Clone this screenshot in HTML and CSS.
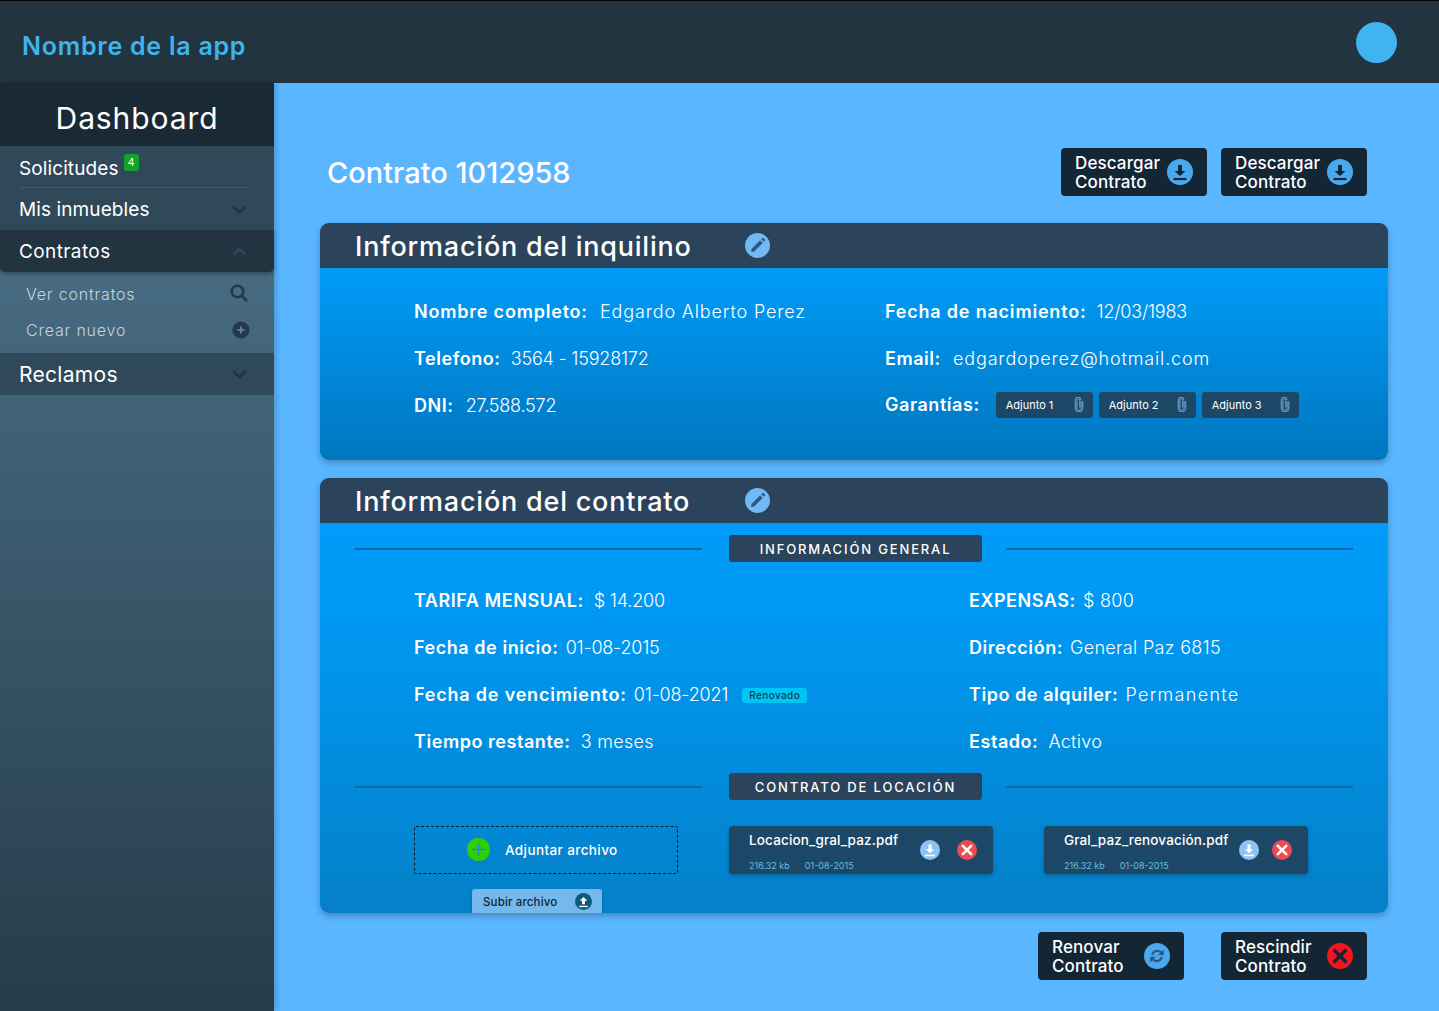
FILE: index.html
```html
<!DOCTYPE html>
<html lang="es">
<head>
<meta charset="utf-8">
<title>Nombre de la app</title>
<link rel="stylesheet" href="styles.css">
</head>
<body>
<svg class="sprite" width="0" height="0">
  <symbol id="i-down" viewBox="0 0 24 24"><path d="M10.200 5.500h3.600V11h3.200L12 15.800 7 11h3.200z"/><rect x="6" y="17.500" width="12" height="2"/></symbol>
  <symbol id="i-up" viewBox="0 0 24 24"><path d="M10 16h4v-5h3.400L12 5.600 6.600 11H10z"/><rect x="6" y="18" width="12" height="2"/></symbol>
  <symbol id="i-x" viewBox="0 0 24 24"><path d="M7 7l10 10M17 7L7 17" fill="none" stroke="currentColor" stroke-width="3.200" stroke-linecap="round"/></symbol>
  <symbol id="i-pen" viewBox="0 0 24 24"><path d="M6 15.500L14.500 7l2.500 2.500L8.500 18H6zM15.500 6l1-1a1 1 0 0 1 1.400 0l1.100 1.100a1 1 0 0 1 0 1.400l-1 1z"/></symbol>
  <symbol id="i-clip" viewBox="0 0 12 18"><path d="M8.500 5v8.500a2.500 2.500 0 0 1-5 0V4a1.700 1.700 0 0 1 3.400 0v8.500" fill="none" stroke="currentColor" stroke-width="1.100"/><path d="M10.500 5v8.500a4.500 4.500 0 0 1-9 0V4a3.500 3.500 0 0 1 7-.5" fill="none" stroke="currentColor" stroke-width="1.100"/></symbol>
  <symbol id="i-chev" viewBox="0 0 14 8"><path d="M1.200 1L7 6.600 12.800 1" fill="none" stroke="currentColor" stroke-width="2.400"/></symbol>
  <symbol id="i-sync" viewBox="0 0 24 24"><path d="M6.500 11a6 6 0 0 1 10-3.200L18.300 6v5.200H13l2-2a4 4 0 0 0-6.400 1.800zM17.500 13a6 6 0 0 1-10 3.200L5.700 18v-5.200H11l-2 2a4 4 0 0 0 6.400-1.800z"/></symbol>
</svg>

<header class="topbar">
  <a class="brand">Nombre de la app</a>
  <span class="avatar"></span>
</header>

<div class="layout">
  <nav class="sidebar">
    <h2 class="side-title">Dashboard</h2>
    <div class="nav-item nav-first"><span>Solicitudes</span><sup class="count">4</sup></div>
    <div class="nav-item"><span>Mis inmuebles</span><svg class="chev"><use href="#i-chev"/></svg></div>
    <div class="nav-item nav-open"><span>Contratos</span><svg class="chev chev-up"><use href="#i-chev"/></svg></div>
    <div class="sub-list">
      <div class="sub-item"><span>Ver contratos</span>
        <svg class="sub-icon sub-search" viewBox="1 1 18 18"><circle cx="8.500" cy="8.500" r="5.800" fill="none" stroke="currentColor" stroke-width="2.600"/><path d="M13 13l5 5" stroke="currentColor" stroke-width="3"/></svg>
      </div>
      <div class="sub-item"><span>Crear nuevo</span>
        <svg class="sub-icon" viewBox="0 0 20 20"><circle cx="10" cy="10" r="9.500"/><path d="M10 6v8M6 10h8" stroke="#6f8a9e" stroke-width="1.800"/></svg>
      </div>
    </div>
    <div class="nav-item nav-big"><span>Reclamos</span><svg class="chev"><use href="#i-chev"/></svg></div>
  </nav>

  <main class="content">
    <div class="title-row">
      <h1>Contrato 1012958</h1>
      <div class="actions">
        <button class="btn">Descargar<br>Contrato<span class="btn-icon"><svg><use href="#i-down"/></svg></span></button>
        <button class="btn">Descargar<br>Contrato<span class="btn-icon"><svg><use href="#i-down"/></svg></span></button>
      </div>
    </div>

    <section class="card card-tenant">
      <div class="card-head">
        <h3>Información del inquilino</h3>
        <span class="edit"><svg><use href="#i-pen"/></svg></span>
      </div>
      <div class="tenant-grid">
        <p><b class="long">Nombre completo:</b> <span class="wide">Edgardo Alberto Perez</span></p>
        <p><b class="long near">Fecha de nacimiento:</b> <span class="num">12/03/1983</span></p>
        <p><b class="near">Telefono:</b> <span class="num">3564 - 15928172</span></p>
        <p><b>Email:</b> <span class="wide">edgardoperez@hotmail.com</span></p>
        <p><b>DNI:</b> <span class="num">27.588.572</span></p>
        <div class="guarantees">
          <b>Garantías:</b>
          <a class="attach">Adjunto 1<svg><use href="#i-clip"/></svg></a>
          <a class="attach">Adjunto 2<svg><use href="#i-clip"/></svg></a>
          <a class="attach">Adjunto 3<svg><use href="#i-clip"/></svg></a>
        </div>
      </div>
    </section>

    <section class="card card-contract">
      <div class="card-head">
        <h3>Información del contrato</h3>
        <span class="edit"><svg><use href="#i-pen"/></svg></span>
      </div>
      <div class="divider"><i></i><span>INFORMACIÓN GENERAL</span><i></i></div>
      <div class="contract-grid">
        <p><b>TARIFA MENSUAL:</b> <span class="num">$ 14.200</span></p>
        <p><b class="near">EXPENSAS:</b> <span>$ 800</span></p>
        <p><b class="near">Fecha de inicio:</b> <span class="num">01-08-2015</span></p>
        <p><b class="near">Dirección:</b> <span>General Paz 6815</span></p>
        <p><b class="long">Fecha de vencimiento:</b> <span class="num">01-08-2021</span> <em class="tag">Renovado</em></p>
        <p><b class="near">Tipo de alquiler:</b> <span class="wider">Permanente</span></p>
        <p><b>Tiempo restante:</b> <span>3 meses</span></p>
        <p><b>Estado:</b> <span>Activo</span></p>
      </div>
      <div class="divider divider-files"><i></i><span>CONTRATO DE LOCACIÓN</span><i></i></div>
      <div class="files">
        <div class="upload">
          <div class="dropzone">
            <span class="add"><svg viewBox="0 0 24 24"><path d="M12 5v14M5 12h14" stroke="#1d8fc4" stroke-width="1.800"/></svg></span>
            Adjuntar archivo
          </div>
          <button class="send">Subir archivo<span class="send-icon"><svg><use href="#i-up"/></svg></span></button>
        </div>
        <div class="file">
          <div class="file-info">
            <strong>Locacion_gral_paz.pdf</strong>
            <small><span>216.32 kb</span><span>01-08-2015</span></small>
          </div>
          <span class="round round-down"><svg><use href="#i-down"/></svg></span>
          <span class="round round-del"><svg><use href="#i-x"/></svg></span>
        </div>
        <div class="file file-long">
          <div class="file-info">
            <strong>Gral_paz_renovación.pdf</strong>
            <small><span>216.32 kb</span><span>01-08-2015</span></small>
          </div>
          <span class="round round-down"><svg><use href="#i-down"/></svg></span>
          <span class="round round-del"><svg><use href="#i-x"/></svg></span>
        </div>
      </div>
    </section>

    <div class="bottom-actions">
      <button class="btn">Renovar<br>Contrato<span class="btn-icon btn-icon-sync"><svg><use href="#i-sync"/></svg></span></button>
      <button class="btn">Rescindir<br>Contrato<span class="btn-icon btn-icon-red"><svg><use href="#i-x"/></svg></span></button>
    </div>
  </main>
</div>
</body>
</html>
```

FILE: styles.css
```css
* {
    box-sizing: border-box;
}
html, body {
    margin: 0;
    height: 100%;
}
body {
    font-family: Inter, "Open Sans", sans-serif;
    background: #5ab6ff;
    color: #fff;
    overflow: hidden;
}
.sprite {
    display: block;
    height: 0;
}
p, h1, h2, h3 {
    margin: 0;
}

/* top bar */
.topbar {
    height: 83px;
    background: #22343f;
    border-top: 1px solid #000;
    display: flex;
    align-items: center;
    justify-content: space-between;
    padding: 0 42px 0 22px;
}
.brand {
    color: #40b4ea;
    font-size: 25px;
    font-weight: 600;
    letter-spacing: .75px;
    padding-top: 8px;
}
.avatar {
    width: 41px;
    height: 41px;
    border-radius: 50%;
    background: #40b4ee;
}

.layout {
    display: flex;
    height: 928px;
}

/* sidebar */
.sidebar {
    width: 274px;
    flex: none;
    background: linear-gradient(#4f7790, #263c49);
    box-shadow: 2px 0 6px rgba(0, 0, 0, .2);
}
.side-title {
    height: 63px;
    background: #192a35;
    font-size: 30px;
    font-weight: 400;
    letter-spacing: .9px;
    text-align: center;
    line-height: 71px;
}
.nav-item {
    height: 42px;
    background: #304958;
    display: flex;
    align-items: center;
    padding: 0 27px 0 19px;
    font-size: 19px;
    font-weight: 400;
    letter-spacing: .1px;
}
.nav-item span {
    flex: 1;
}
.nav-first {
    position: relative;
    padding-top: 2px;
}
.nav-first::after {
    content: "";
    position: absolute;
    left: 19px;
    right: 28px;
    bottom: 0;
    height: 1px;
    background: #41596a;
}
.nav-first span {
    flex: none;
}
.count {
    background: #13a32c;
    border-radius: 3px;
    width: 15px;
    height: 17px;
    font-size: 11px;
    line-height: 17px;
    text-align: center;
    margin: -12px 0 0 5px;
}
.nav-open {
    background: #22343f;
    border-radius: 0 0 5px 5px;
    box-shadow: 0 2px 4px rgba(0, 0, 0, .3);
    letter-spacing: .4px;
    position: relative;
}
.nav-big {
    font-size: 21px;
    letter-spacing: .3px;
}
.chev {
    width: 15px;
    height: 9px;
    color: #1f3444;
}
.chev-up {
    color: #2e4759;
    transform: rotate(180deg);
}
.sub-list {
    height: 81px;
    padding-top: 4px;
}
.sub-item {
    height: 36px;
    display: flex;
    align-items: center;
    padding: 0 24px 0 26px;
    color: #c6d3dc;
    font-size: 16px;
    font-weight: 300;
    letter-spacing: .8px;
}
.sub-item span {
    flex: 1;
}
.sub-icon {
    width: 18px;
    height: 18px;
    color: #22394f;
    fill: #22394f;
}
.sub-search {
    margin: -2px 2px 0 0;
}

/* main */
.content {
    flex: 1;
    padding: 65px 51px 0 46px;
}
.title-row {
    display: flex;
    align-items: center;
    justify-content: space-between;
    height: 48px;
    padding: 0 21px 0 7px;
}
h1 {
    font-size: 29px;
    font-weight: 500;
}
.actions {
    display: flex;
    gap: 14px;
}
.btn {
    width: 146px;
    height: 48px;
    background: #122635;
    color: #fff;
    border: 0;
    border-radius: 4px;
    font: 500 17px/19px Inter, sans-serif;
    letter-spacing: .12px;
    text-align: left;
    padding: 1px 0 0 14px;
    position: relative;
}
.btn-icon {
    position: absolute;
    right: 14px;
    top: 11px;
    width: 26px;
    height: 26px;
    border-radius: 50%;
    background: #4aa8ef;
    color: #122635;
    fill: #122635;
}
.btn-icon svg {
    display: block;
    width: 26px;
    height: 26px;
}
.btn-icon-sync {
    fill: #2a5b85;
}
.btn-icon-red {
    background: #f5131e;
}

/* cards */
.card {
    border-radius: 9px;
    box-shadow: 0 3px 6px rgba(0, 0, 0, .25);
    overflow: hidden;
}
.card-tenant {
    margin-top: 27px;
    height: 237px;
    background: linear-gradient(#009cf8 45px, #0076bf);
}
.card-contract {
    margin-top: 18px;
    height: 435px;
    background: linear-gradient(#009cfa 45px, #0096ee 40%, #0580c8);
}
.card-head {
    height: 45px;
    background: #2b445b;
    display: flex;
    align-items: center;
    padding-left: 35px;
}
.card-head h3 {
    width: 390px;
    padding-top: 1px;
    font-size: 27px;
    font-weight: 500;
    letter-spacing: .78px;
}
.edit {
    width: 25px;
    height: 25px;
    border-radius: 50%;
    background: #71b9f5;
    fill: #2b5a85;
}
.edit svg {
    display: block;
    width: 25px;
    height: 25px;
}
.tenant-grid, .contract-grid {
    display: grid;
    padding-left: 94px;
    grid-auto-rows: 47px;
    align-items: center;
    font-size: 18px;
    font-weight: 300;
}
.tenant-grid p, .contract-grid p {
    padding-top: 2px;
}
.tenant-grid {
    grid-template-columns: 471px 1fr;
    padding-top: 19px;
}
.contract-grid {
    grid-template-columns: 555px 1fr;
    padding-top: 14px;
}
.tenant-grid b, .contract-grid b {
    font-weight: 600;
    letter-spacing: .55px;
    margin-right: 5px;
}
.tenant-grid b {
    margin-right: 7px;
}
.tenant-grid b.long, .contract-grid b.long {
    letter-spacing: .8px;
}
.contract-grid b.long {
    margin-right: 2px;
}
.tenant-grid b.near {
    margin-right: 5px;
}
.contract-grid b.near {
    margin-right: 2px;
}
.tenant-grid span, .contract-grid span {
    letter-spacing: .3px;
}
.tenant-grid .num, .contract-grid .num {
    letter-spacing: -.2px;
}
.tenant-grid .wide {
    letter-spacing: .85px;
}
.contract-grid .wider {
    letter-spacing: 1.300px;
}
.guarantees {
    display: flex;
    align-items: center;
    gap: 6px;
}
.tenant-grid .guarantees b {
    margin-right: 10px;
}
.attach {
    width: 97px;
    height: 26px;
    border-radius: 3px;
    background: #1d4766;
    font-size: 11px;
    font-weight: 400;
    display: flex;
    align-items: center;
    justify-content: space-between;
    padding: 0 8px 0 10px;
}
.attach svg {
    width: 12px;
    height: 15px;
    color: #7ab3e6;
}

/* section dividers */
.divider {
    display: grid;
    grid-template-columns: 347px 1fr 347px;
    align-items: center;
    margin: 12px 35px 0;
}
.divider-files {
    margin-top: 9px;
}
.divider i {
    height: 2px;
    background: #0d6aa8;
}
.divider span {
    height: 27px;
    margin: 0 24px 0 27px;
    background: #2b445b;
    border-radius: 3px;
    font-size: 13px;
    font-weight: 500;
    letter-spacing: 1.850px;
    line-height: 28px;
    text-align: center;
}
.tag {
    display: inline-block;
    vertical-align: 2px;
    margin-left: 9px;
    height: 15px;
    padding: 0 7px;
    background: #00c6f5;
    color: #12394f;
    border-radius: 3px;
    font-size: 10px;
    font-style: normal;
    font-weight: 500;
    letter-spacing: .4px;
    line-height: 15px;
}

/* files */
.files {
    display: flex;
    gap: 51px;
    margin: 26px 0 0 94px;
}
.upload {
    width: 264px;
    flex: none;
}
.dropzone {
    height: 48px;
    border: 1px dashed #0b1b26;
    border-radius: 2px;
    display: flex;
    align-items: center;
    gap: 15px;
    padding: 0 0 1px 52px;
    font-size: 13.500px;
    font-weight: 500;
    letter-spacing: .4px;
}
.add {
    width: 23px;
    height: 23px;
    border-radius: 50%;
    background: #2fd000;
}
.add svg {
    display: block;
}
.send {
    display: flex;
    align-items: center;
    justify-content: space-between;
    width: 130px;
    height: 25px;
    margin: 15px 0 0 58px;
    padding: 0 10px 0 11px;
    background: #74b8ec;
    color: #0f2433;
    border: 0;
    border-radius: 3px;
    box-shadow: 0 2px 3px rgba(0, 0, 0, .2);
    font: 500 11.500px Inter, sans-serif;
    letter-spacing: .15px;
}
.send-icon {
    width: 17px;
    height: 17px;
    border-radius: 50%;
    background: #0c5a7f;
    fill: #fff;
}
.send-icon svg {
    display: block;
    width: 17px;
    height: 17px;
}
.file {
    width: 264px;
    height: 48px;
    background: #1d4766;
    border-radius: 4px;
    box-shadow: 0 2px 4px rgba(0, 0, 0, .25);
    display: flex;
    align-items: center;
    padding: 0 16px 0 20px;
    gap: 17px;
}
.file-long {
    gap: 13px;
}
.file-info {
    flex: 1;
    white-space: nowrap;
    min-width: 0;
}
.file-info strong {
    display: block;
    font-size: 13.500px;
    font-weight: 500;
    letter-spacing: .15px;
    margin-top: 2px;
}
.file-info small {
    display: flex;
    gap: 15px;
    margin-top: 12px;
    font-size: 9px;
    font-weight: 400;
    color: #62bfe0;
}
.round {
    width: 20px;
    height: 20px;
    flex: none;
    border-radius: 50%;
}
.round svg {
    display: block;
    width: 20px;
    height: 20px;
}
.round-down {
    background: #8cc3f3;
    fill: #fff;
}
.round-del {
    background: #ec4c50;
    color: #fff;
}

.bottom-actions {
    display: flex;
    justify-content: flex-end;
    gap: 37px;
    margin-top: 19px;
    padding-right: 21px;
}
```
